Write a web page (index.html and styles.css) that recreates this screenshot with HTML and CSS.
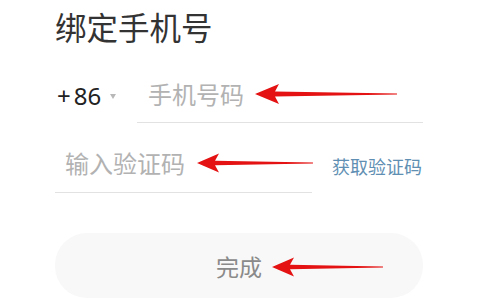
FILE: index.html
```html
<!DOCTYPE html>
<html lang="zh">
<head>
<meta charset="utf-8">
<link rel="stylesheet" href="styles.css">
</head>
<body>
<div class="page">
  <h1 class="title">绑定手机号</h1>
  <div class="phone-row">
    <div class="code">
      <span class="code-text"><span class="plus">+</span>86</span>
      <span class="caret"></span>
    </div>
    <div class="field field-phone"><span class="ph">手机号码</span></div>
  </div>
  <div class="sms-row">
    <div class="field field-sms"><span class="ph">输入验证码</span></div>
    <span class="get-code">获取验证码</span>
  </div>
  <div class="submit">完成</div>

  <svg class="arrow arrow-1" width="142" height="22" viewBox="0 0 142 22">
    <polygon points="0,11 24,1 20,8.5 142,10.6 142,11.4 20,13.5 24,21" />
  </svg>
  <svg class="arrow arrow-2" width="116" height="20" viewBox="0 0 116 20">
    <polygon points="0,10 22,0.5 18,7.8 116,9.6 116,10.4 18,12.2 22,19.5" />
  </svg>
  <svg class="arrow arrow-3" width="111" height="20" viewBox="0 0 111 20">
    <polygon points="0,10 22,0.5 18,7.8 111,9.6 111,10.4 18,12.2 22,19.5" />
  </svg>
</div>
</body>
</html>
```

FILE: styles.css
```css
html, body {
  margin: 0;
  padding: 0;
  background: #ffffff;
}

.page {
  position: relative;
  width: 480px;
  height: 300px;
  overflow: hidden;
  box-sizing: border-box;
  padding: 11px 0 0 55px;
  font-family: "Noto Sans CJK SC", "Noto Sans", sans-serif;
}

.title {
  margin: 0;
  font-size: 31.5px;
  line-height: 31px;
  font-weight: 400;
  color: #333333;
}

.phone-row {
  display: flex;
  align-items: flex-start;
  margin-top: 40px;
}

.code {
  width: 82px;
  display: flex;
  align-items: flex-start;
}

.code-text {
  font-family: "Noto Sans", sans-serif;
  font-size: 24px;
  line-height: 24px;
  padding-top: 2px;
  margin-left: 2px;
  color: #222222;
}

.plus {
  margin-right: 3px;
}

.caret {
  width: 0;
  height: 0;
  margin: 12px 0 0 9px;
  border-left: 3.5px solid transparent;
  border-right: 3.5px solid transparent;
  border-top: 5px solid #b8b8b8;
}

.field {
  box-sizing: border-box;
  border-bottom: 1.5px solid #e2e2e2;
  font-size: 24px;
  line-height: 24px;
}

.field-phone {
  width: 286px;
  padding: 0 0 16px 11px;
}

.field-sms {
  width: 257px;
  padding: 0 0 17px 10px;
}

.ph {
  color: #b2b2b2;
}

.sms-row {
  display: flex;
  align-items: flex-start;
  margin-top: 28px;
}

.get-code {
  margin: 6px 0 0 20px;
  font-size: 18px;
  line-height: 18px;
  color: #5f8fb3;
}

.submit {
  margin-top: 40px;
  width: 368px;
  height: 65px;
  border-radius: 32px;
  background: #f8f8f8;
  display: flex;
  align-items: center;
  justify-content: center;
  font-size: 23px;
  color: #8a8a8a;
}

.arrow {
  position: absolute;
  fill: #e41212;
}

.arrow-1 { left: 255px; top: 83px; }
.arrow-2 { left: 197px; top: 153px; }
.arrow-3 { left: 272px; top: 257px; }
```
